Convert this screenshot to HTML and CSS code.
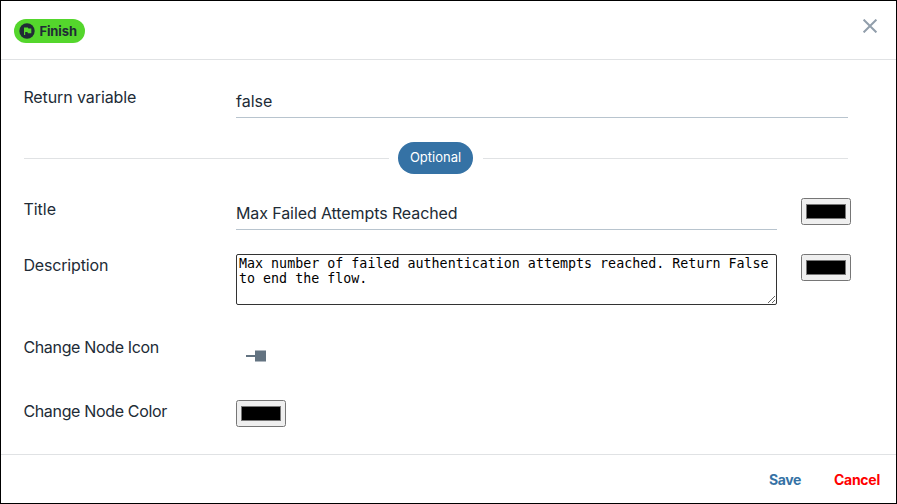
FILE: index.html
```html
<!DOCTYPE html>
<html lang="en">
<head>
<meta charset="utf-8">
<title>Finish</title>
<link rel="stylesheet" href="styles.css">
</head>
<body>
<div class="dialog">
  <header class="header">
    <span class="badge">
      <svg width="16" height="16" viewBox="0 0 16 16"><circle cx="8" cy="8" r="7.7" fill="#212b36"/><path d="M5 12V4.5h3.9l.5 1.1h2.9v4.6H8.9l-.5-1.1H6.2V12z" fill="#54d62c"/></svg>
      <span class="badge-text">Finish</span>
    </span>
    <svg class="close" width="14" height="14" viewBox="0 0 14 14"><path d="M.6.6l12.8 12.8M13.4.6L.6 13.4" stroke="#919eab" stroke-width="2"/></svg>
  </header>
  <main class="body">
    <div class="row row-return">
      <label class="label tight">Return variable</label>
      <div class="line-input">false</div>
    </div>
    <div class="divider"><span class="chip">Optional</span></div>
    <div class="row row-title">
      <label class="label">Title</label>
      <div class="line-input short tight">Max Failed Attempts Reached</div>
      <input class="color" type="color" value="#000000">
    </div>
    <div class="row row-description">
      <label class="label label-description">Description</label>
      <textarea class="description" spellcheck="false">Max number of failed authentication attempts reached. Return False to end the flow.</textarea>
      <input class="color" type="color" value="#000000">
    </div>
    <div class="row row-icon">
      <label class="label label-node">Change Node Icon</label>
      <svg class="node-icon" width="20" height="12" viewBox="0 0 20 12"><path d="M0 5h9v2H0z" fill="#637381"/><rect x="9" y=".5" width="11" height="11" fill="#637381"/></svg>
    </div>
    <div class="row">
      <label class="label label-node">Change Node Color</label>
      <input class="color" type="color" value="#000000">
    </div>
  </main>
  <footer class="footer">
    <span class="save">Save</span>
    <span class="cancel">Cancel</span>
  </footer>
</div>
</body>
</html>
```
FILE: styles.css
```css
* { box-sizing: border-box; }
body { margin: 0; background: #fff; }
.dialog {
  width: 897px;
  height: 504px;
  border: 1px solid #000;
  display: flex;
  flex-direction: column;
  font: 16px/22px Inter, "Liberation Sans", sans-serif;
  color: #212b36;
  white-space: nowrap;
}
.header {
  height: 59px;
  flex: none;
  border-bottom: 1px solid #e0e2e4;
  display: flex;
  justify-content: space-between;
  padding: 18px 19px 0 13px;
}
.badge {
  width: 71px;
  height: 24px;
  border-radius: 12px;
  background: #54d62c;
  display: flex;
  align-items: center;
  gap: 4px;
  padding-left: 5px;
  font-size: 13px;
  font-weight: 700;
}
.badge-text { letter-spacing: -.1px; padding-left: .4px; }
.body { flex: 1; padding: 26px 0 0 23px; }
.row { display: flex; align-items: flex-start; }
.row-return { height: 56px; }
.row-title { height: 56px; }
.row-description { height: 82px; }
.row-icon { height: 64px; }
.label { width: 212px; flex: none; text-indent: -.6px; }
.tight { letter-spacing: -.1px; }
.label-description { letter-spacing: -.16px; }
.label-node { letter-spacing: -.34px; }
.line-input {
  width: 612px;
  height: 32px;
  border-bottom: 1px solid #b8c4ce;
  padding-top: 4px;
}
.short { width: 541px; }
.divider {
  width: 824px;
  height: 32px;
  margin-bottom: 24px;
  display: flex;
  align-items: center;
  gap: 10px;
}
.divider::before, .divider::after { content: ""; height: 1px; background: #e0e2e4; }
.divider::before { width: 365px; margin-right: -1px; }
.divider::after { flex: 1; }
.chip {
  width: 75px;
  height: 32px;
  border-radius: 16px;
  background: #3572a5;
  color: #fff;
  font-size: 13px;
  line-height: 30px;
  text-align: center;
}
.color { width: 50px; height: 27px; flex: none; margin: 0; }
.line-input + .color, .description + .color { margin-left: 24px; }
.description {
  width: 541px;
  height: 51px;
  margin: 0;
  padding: 1px 2px 2px;
  border: 1px solid #333;
  border-radius: 2px;
  font: 13.333px/15px "DejaVu Sans Mono", monospace;
  color: #000;
  resize: both;
}
.node-icon { margin: 14px 0 0 10px; }
.footer {
  height: 49px;
  flex: none;
  border-top: 1px solid #e0e2e4;
  display: flex;
  align-items: center;
  justify-content: flex-end;
  gap: 33px;
  padding: 2px 16px 0 0;
  font-size: 14px;
  font-weight: 700;
}
.save { color: #3572a5; letter-spacing: -.4px; }
.cancel { color: #f00; letter-spacing: -.25px; }
```
